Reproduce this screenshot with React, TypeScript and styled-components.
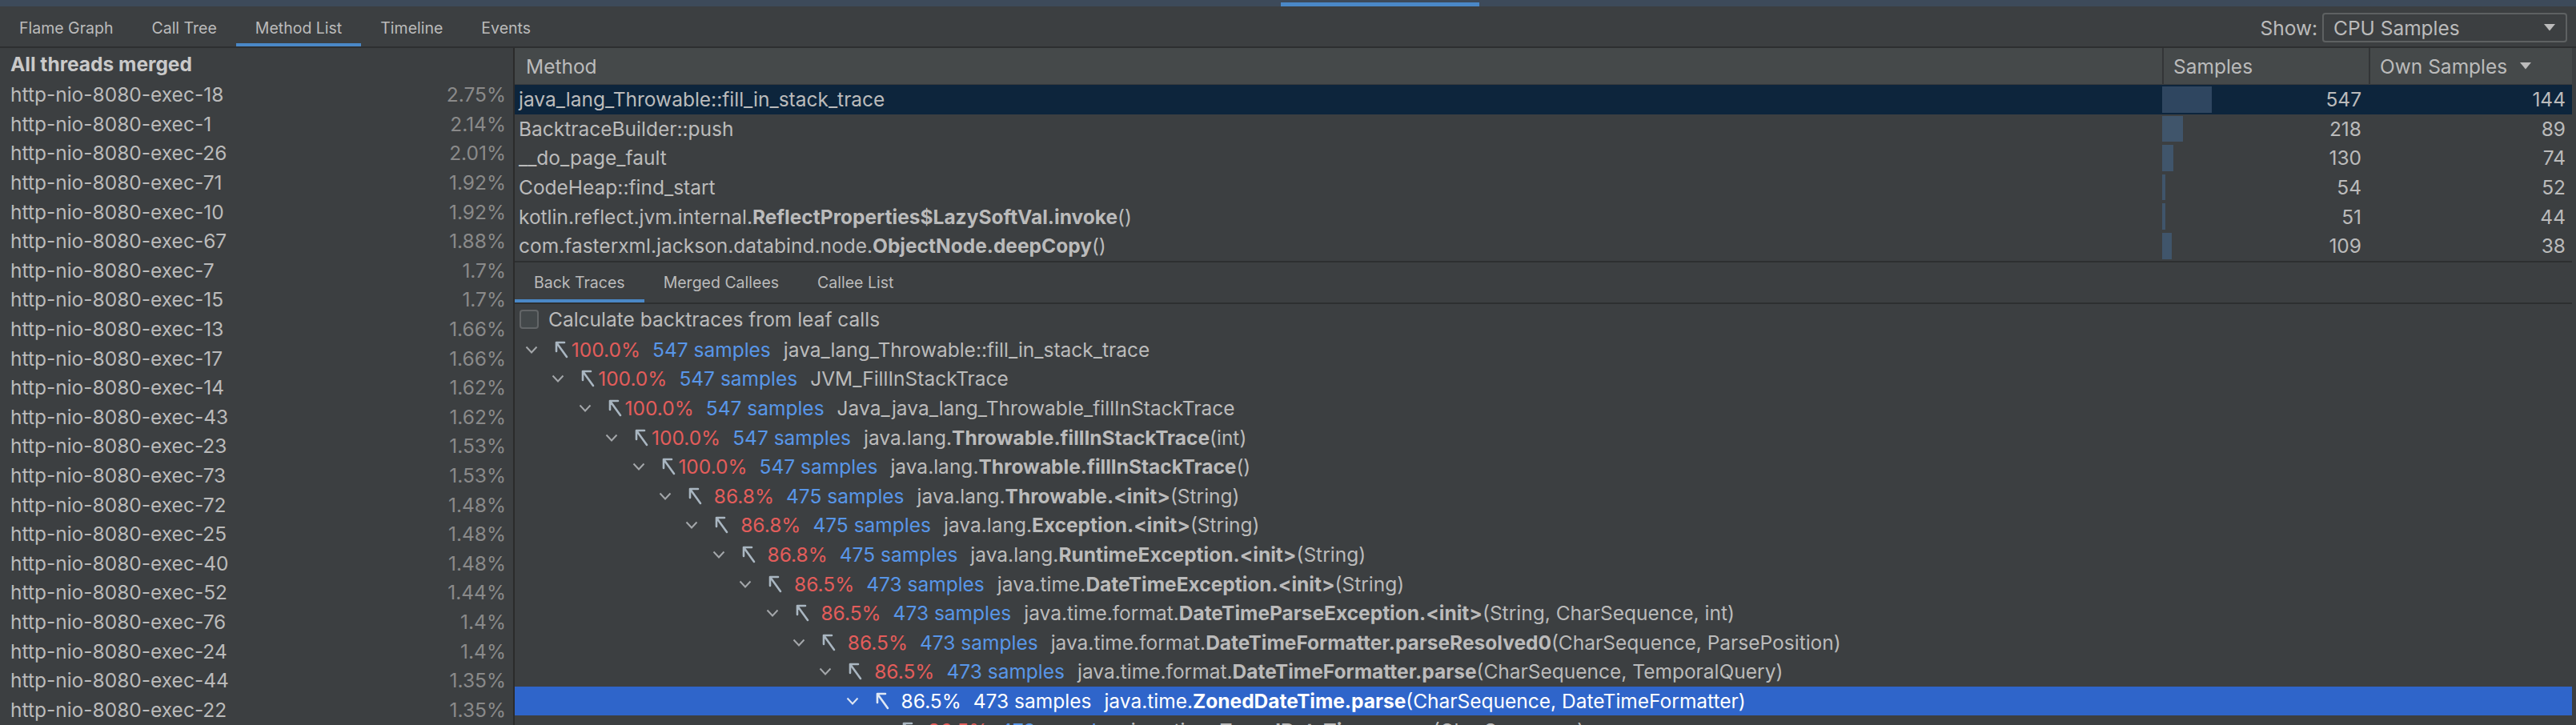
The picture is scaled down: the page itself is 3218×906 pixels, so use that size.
import React from 'react';
import styled, { createGlobalStyle, css } from 'styled-components';

const GlobalStyle = createGlobalStyle`
    html, body {
        margin: 0;
        padding: 0;
        background: #3c3f41;
    }
    body {
        font-family: Inter, "Liberation Sans", sans-serif;
        color: #bbbbbb;
        overflow: hidden;
    }
    * { box-sizing: border-box; }
`;

const ROW = 36.6;

const Page = styled.div`
    width: 3218px;
    height: 906px;
    display: flex;
    flex-direction: column;
    background: #3c3f41;
    overflow: hidden;
`;

const TopStrip = styled.div`
    height: 8px;
    flex: none;
    display: flex;
    padding-left: 1600px;
    background: #3d4a5a;
`;

const StripMark = styled.div`
    width: 248px;
    height: 5px;
    margin-top: 3px;
    background: #4a88c7;
`;

const TabBar = styled.div`
    height: 52px;
    flex: none;
    display: flex;
    align-items: stretch;
    padding-top: 3px;
    padding-right: 11px;
    border-bottom: 2px solid #2d2f30;
`;

const Tab = styled.div<{ $active?: boolean }>`
    position: relative;
    display: flex;
    align-items: center;
    padding: 0 24px;
    font-size: 19.5px;
    color: #bbbbbb;
    white-space: nowrap;

    ${(p) => p.$active && css`
        &::after {
            content: '';
            position: absolute;
            left: 0;
            right: 0;
            bottom: 0;
            height: 4px;
            background: #4a88c7;
        }
    `}
`;

const ShowBox = styled.div`
    margin-left: auto;
    display: flex;
    align-items: center;
    gap: 6px;
    font-size: 24.5px;
`;

const Dropdown = styled.div`
    width: 306px;
    height: 37px;
    display: flex;
    align-items: center;
    justify-content: space-between;
    padding: 0 13px 0 12px;
    border: 2px solid #5e6162;
    border-radius: 4px;
    background: #3c3f41;
    color: #bbbbbb;
`;

const Body = styled.div`
    flex: 1;
    display: flex;
    min-height: 0;
`;

const Sidebar = styled.div`
    width: 643px;
    flex: none;
    display: flex;
    flex-direction: column;
    border-right: 2px solid #2b2b2b;
    font-size: 24.5px;
`;

const SideTitle = styled.div`
    height: 40px;
    flex: none;
    display: flex;
    align-items: center;
    padding-left: 13px;
    font-weight: 700;
    color: #c9c9c9;
`;

const ThreadRow = styled.div`
    height: ${ROW}px;
    flex: none;
    display: flex;
    align-items: center;
    justify-content: space-between;
    padding: 0 9px 0 13px;
    white-space: nowrap;
`;

const Share = styled.span`
    color: #8a8a8a;
`;

const Main = styled.div`
    flex: 1;
    display: flex;
    flex-direction: column;
    min-width: 0;
    padding-right: 5px;
    font-size: 24.5px;
`;

const Table = styled.div`
    flex: none;
    display: flex;
    flex-direction: column;
    border-bottom: 2px solid #2d2f30;
`;

const HeadRow = styled.div`
    height: 46px;
    display: flex;
    align-items: stretch;
    background: #45494a;
    border-bottom: 1px solid #393b3d;
`;

const HeadCell = styled.div<{ $w?: number; $sep?: boolean }>`
    display: flex;
    align-items: center;
    padding-left: 14px;
    ${(p) => (p.$w ? `width: ${p.$w}px; flex: none;` : 'flex: 1;')}

    ${(p) => p.$sep && css`
        padding-left: 12px;
        border-left: 2px solid #333537;
    `}
`;

const TableRow = styled.div<{ $selected?: boolean }>`
    height: ${ROW}px;
    display: flex;
    align-items: stretch;
    background: ${(p) => (p.$selected ? '#0d253c' : 'transparent')};
`;

const NameCell = styled.div`
    flex: 1;
    display: flex;
    align-items: center;
    padding-left: 5px;
    white-space: nowrap;
    overflow: hidden;
`;

const NumCell = styled.div<{ $w: number; $pad: number }>`
    width: ${(p) => p.$w}px;
    flex: none;
    display: flex;
    align-items: center;
    justify-content: flex-end;
    padding-right: ${(p) => p.$pad}px;
`;

const BarCell = styled(NumCell)`
    justify-content: space-between;
    padding-top: 2px;
    padding-bottom: 2px;
    align-items: stretch;
`;

const Bar = styled.div<{ $selected?: boolean }>`
    background: ${(p) => (p.$selected ? '#2f4660' : '#40556b')};
`;

const BarValue = styled.span`
    align-self: center;
`;

const B = styled.span`
    font-weight: 700;
`;

const SubTabs = styled.div`
    height: 52px;
    flex: none;
    display: flex;
    align-items: stretch;
    border-bottom: 2px solid #2d2f30;
`;

const CheckRow = styled.div`
    height: 39px;
    flex: none;
    display: flex;
    align-items: center;
    padding-left: 6px;
    gap: 12px;
`;

const CheckBox = styled.div`
    width: 24px;
    height: 24px;
    border: 2px solid #626567;
    border-radius: 4px;
    background: #43484a;
`;

const Tree = styled.div`
    flex: 1;
    min-height: 0;
    overflow: hidden;
`;

const TreeRow = styled.div<{ $level: number; $selected?: boolean }>`
    height: ${ROW}px;
    display: flex;
    align-items: center;
    padding-left: ${(p) => 13 + p.$level * 33.4}px;
    white-space: nowrap;
    background: ${(p) => (p.$selected ? '#2f65ca' : 'transparent')};
    color: ${(p) => (p.$selected ? '#ffffff' : '#bbbbbb')};
`;

const Chevron = styled.svg`
    width: 16px;
    height: 10px;
    flex: none;
    margin-right: 20px;
`;

const Arrow = styled.svg`
    width: 18px;
    height: 22px;
    flex: none;
    margin-right: 3px;
`;

const Percent = styled.span<{ $selected?: boolean }>`
    width: 87px;
    flex: none;
    text-align: right;
    color: ${(p) => (p.$selected ? '#ffffff' : '#e35d5b')};
`;

const Count = styled.span<{ $selected?: boolean }>`
    margin-left: 15px;
    color: ${(p) => (p.$selected ? '#ffffff' : '#5896e8')};
`;

const Name = styled.span`
    margin-left: 16px;
`;

const threads: [string, string][] = [
    ['18', '2.75%'], ['1', '2.14%'], ['26', '2.01%'], ['71', '1.92%'], ['10', '1.92%'],
    ['67', '1.88%'], ['7', '1.7%'], ['15', '1.7%'], ['13', '1.66%'], ['17', '1.66%'],
    ['14', '1.62%'], ['43', '1.62%'], ['23', '1.53%'], ['73', '1.53%'], ['72', '1.48%'],
    ['25', '1.48%'], ['40', '1.48%'], ['52', '1.44%'], ['76', '1.4%'], ['24', '1.4%'],
    ['44', '1.35%'], ['22', '1.35%'],
];

type Label = [string, string?, string?];

const methods: { name: Label; samples: number; own: number; bar: number }[] = [
    { name: ['java_lang_Throwable::fill_in_stack_trace'], samples: 547, own: 144, bar: 62 },
    { name: ['BacktraceBuilder::push'], samples: 218, own: 89, bar: 26 },
    { name: ['__do_page_fault'], samples: 130, own: 74, bar: 14 },
    { name: ['CodeHeap::find_start'], samples: 54, own: 52, bar: 4 },
    { name: ['kotlin.reflect.jvm.internal.', 'ReflectProperties$LazySoftVal.invoke', '()'], samples: 51, own: 44, bar: 4 },
    { name: ['com.fasterxml.jackson.databind.node.', 'ObjectNode.deepCopy', '()'], samples: 109, own: 38, bar: 12 },
];

const traces: { pct: string; count: string; name: Label }[] = [
    { pct: '100.0%', count: '547', name: ['java_lang_Throwable::fill_in_stack_trace'] },
    { pct: '100.0%', count: '547', name: ['JVM_FillInStackTrace'] },
    { pct: '100.0%', count: '547', name: ['Java_java_lang_Throwable_fillInStackTrace'] },
    { pct: '100.0%', count: '547', name: ['java.lang.', 'Throwable.fillInStackTrace', '(int)'] },
    { pct: '100.0%', count: '547', name: ['java.lang.', 'Throwable.fillInStackTrace', '()'] },
    { pct: '86.8%', count: '475', name: ['java.lang.', 'Throwable.<init>', '(String)'] },
    { pct: '86.8%', count: '475', name: ['java.lang.', 'Exception.<init>', '(String)'] },
    { pct: '86.8%', count: '475', name: ['java.lang.', 'RuntimeException.<init>', '(String)'] },
    { pct: '86.5%', count: '473', name: ['java.time.', 'DateTimeException.<init>', '(String)'] },
    { pct: '86.5%', count: '473', name: ['java.time.format.', 'DateTimeParseException.<init>', '(String, CharSequence, int)'] },
    { pct: '86.5%', count: '473', name: ['java.time.format.', 'DateTimeFormatter.parseResolved0', '(CharSequence, ParsePosition)'] },
    { pct: '86.5%', count: '473', name: ['java.time.format.', 'DateTimeFormatter.parse', '(CharSequence, TemporalQuery)'] },
    { pct: '86.5%', count: '473', name: ['java.time.', 'ZonedDateTime.parse', '(CharSequence, DateTimeFormatter)'] },
    { pct: '86.5%', count: '473', name: ['java.time.', 'ZonedDateTime.parse', '(CharSequence)'] },
];

const SELECTED_TRACE = 12;

const MethodName = ({ label }: { label: Label }) => (
    <>
        {label[0]}
        {label[1] && <B>{label[1]}</B>}
        {label[2]}
    </>
);

const DownTriangle = ({ size = 14 }: { size?: number }) => (
    <svg width={size} height={size * 0.6} viewBox="0 0 14 8.4">
        <polygon points="0,0 14,0 7,8.4" fill="#bbbbbb" />
    </svg>
);

const App = () => {
    return (
        <Page>
            <GlobalStyle />
            <TopStrip>
                <StripMark />
            </TopStrip>

            <TabBar>
                <Tab>Flame Graph</Tab>
                <Tab>Call Tree</Tab>
                <Tab $active>Method List</Tab>
                <Tab>Timeline</Tab>
                <Tab>Events</Tab>
                <ShowBox>
                    <span>Show:</span>
                    <Dropdown>
                        <span>CPU Samples</span>
                        <DownTriangle />
                    </Dropdown>
                </ShowBox>
            </TabBar>

            <Body>
                <Sidebar>
                    <SideTitle>All threads merged</SideTitle>
                    {threads.map(([id, share]) => (
                        <ThreadRow key={id}>
                            <span>http-nio-8080-exec-{id}</span>
                            <Share>{share}</Share>
                        </ThreadRow>
                    ))}
                </Sidebar>

                <Main>
                    <Table>
                        <HeadRow>
                            <HeadCell>Method</HeadCell>
                            <HeadCell $w={258} $sep>Samples</HeadCell>
                            <HeadCell $w={254} $sep>
                                Own Samples
                                <span style={{ marginLeft: 16, display: 'flex' }}>
                                    <DownTriangle />
                                </span>
                            </HeadCell>
                        </HeadRow>
                        {methods.map((m, i) => (
                            <TableRow key={i} $selected={i === 0}>
                                <NameCell>
                                    <MethodName label={m.name} />
                                </NameCell>
                                <BarCell $w={258} $pad={9}>
                                    <Bar $selected={i === 0} style={{ width: m.bar }} />
                                    <BarValue>{m.samples}</BarValue>
                                </BarCell>
                                <NumCell $w={254} $pad={8}>{m.own}</NumCell>
                            </TableRow>
                        ))}
                    </Table>

                    <SubTabs>
                        <Tab $active>Back Traces</Tab>
                        <Tab>Merged Callees</Tab>
                        <Tab>Callee List</Tab>
                    </SubTabs>

                    <CheckRow>
                        <CheckBox />
                        <span>Calculate backtraces from leaf calls</span>
                    </CheckRow>

                    <Tree>
                        {traces.map((t, i) => {
                            const sel = i === SELECTED_TRACE;
                            return (
                                <TreeRow key={i} $level={i} $selected={sel}>
                                    <Chevron viewBox="0 0 16 10">
                                        <polyline points="1.5,1.5 8,8.5 14.5,1.5" fill="none"
                                            stroke={sel ? '#dfe6f2' : '#a4a7aa'} strokeWidth="2" />
                                    </Chevron>
                                    <Arrow viewBox="0 0 18 22">
                                        <path d="M3 2 L3 13 M3 2 L13 2 M3 2 L16 20" fill="none"
                                            stroke={sel ? '#dfe8f5' : '#a9b6c1'} strokeWidth="2.6"
                                            strokeLinecap="round" strokeLinejoin="round" />
                                    </Arrow>
                                    <Percent $selected={sel}>{t.pct}</Percent>
                                    <Count $selected={sel}>{t.count} samples</Count>
                                    <Name>
                                        <MethodName label={t.name} />
                                    </Name>
                                </TreeRow>
                            );
                        })}
                    </Tree>
                </Main>
            </Body>
        </Page>
    );
};

export default App;
